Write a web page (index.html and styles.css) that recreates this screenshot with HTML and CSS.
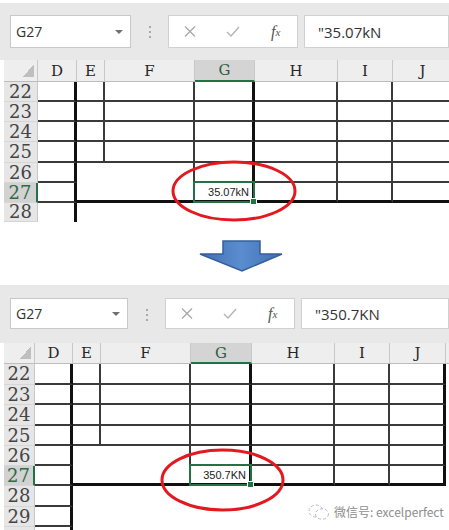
FILE: index.html
```html
<!DOCTYPE html>
<html>
<head>
    <meta charset="UTF-8">
    <title>G27 before and after</title>
    <link rel="stylesheet" href="styles.css">
</head>
<body>
<div class="page">

    <!-- Before -->
    <section class="shot shot-top">
        <div class="toolbar">
            <div class="namebox">G27<i class="caret"></i></div>
            <div class="grip"><i></i><i></i><i></i></div>
            <div class="fbtns">
                <span><svg width="12" height="11" viewBox="0 0 12 11"><path d="M1 0.5 L11 10.5 M11 0.5 L1 10.5" stroke="#a8a8a8" stroke-width="1.3" fill="none"/></svg></span>
                <span><svg width="14" height="11" viewBox="0 0 14 11"><path d="M1 6 L5 10 L13 1" stroke="#b4b4b4" stroke-width="1.4" fill="none"/></svg></span>
                <span class="fx">f<sub>x</sub></span>
            </div>
            <div class="fbar">"35.07kN</div>
        </div>
        <div class="grid">
            <div class="ch corner"></div><div class="ch">D</div><div class="ch">E</div><div class="ch">F</div><div class="ch on">G</div><div class="ch">H</div><div class="ch">I</div><div class="ch">J</div>

            <div class="rh">22</div><div class="b R"></div><div class="b r"></div><div class="b r"></div><div class="b R"></div><div class="b r"></div><div class="b r"></div><div class="b R"></div>
            <div class="rh">23</div><div class="b R"></div><div class="b r"></div><div class="b r"></div><div class="b R"></div><div class="b r"></div><div class="b r"></div><div class="b R"></div>
            <div class="rh">24</div><div class="b R"></div><div class="b r"></div><div class="b r"></div><div class="b R"></div><div class="b r"></div><div class="b r"></div><div class="b R"></div>
            <div class="rh">25</div><div class="b R"></div><div class="b r"></div><div class="b r"></div><div class="b R"></div><div class="b r"></div><div class="b r"></div><div class="b R"></div>
            <div class="rh">26</div><div class="b R"></div><div class="merge r B"></div><div class="b R"></div><div class="b r"></div><div class="b r"></div><div class="b R"></div>
            <div class="rh on">27</div><div class="b R"></div><div class="B R sel">35.07kN</div><div class="B r"></div><div class="B r"></div><div class="B R"></div>
            <div class="rh">28</div><div class="R"></div><div class="rest"></div>
        </div>
    </section>

    <div class="arrow-row">
        <svg width="86" height="36" viewBox="0 0 86 36">
            <defs>
                <linearGradient id="blue" x1="0" y1="0" x2="1" y2="0">
                    <stop offset="0" stop-color="#3f6fb0"/>
                    <stop offset="0.5" stop-color="#5a8dd0"/>
                    <stop offset="1" stop-color="#3f6fb0"/>
                </linearGradient>
            </defs>
            <polygon points="24,2 61,2 61,15 83,15 43,32 1,15 24,15" fill="url(#blue)" stroke="#355f9c" stroke-width="1.5"/>
        </svg>
    </div>

    <!-- After -->
    <section class="shot shot-bottom">
        <div class="toolbar">
            <div class="namebox">G27<i class="caret"></i></div>
            <div class="grip"><i></i><i></i><i></i></div>
            <div class="fbtns">
                <span><svg width="12" height="11" viewBox="0 0 12 11"><path d="M1 0.5 L11 10.5 M11 0.5 L1 10.5" stroke="#a8a8a8" stroke-width="1.3" fill="none"/></svg></span>
                <span><svg width="14" height="11" viewBox="0 0 14 11"><path d="M1 6 L5 10 L13 1" stroke="#b4b4b4" stroke-width="1.4" fill="none"/></svg></span>
                <span class="fx">f<sub>x</sub></span>
            </div>
            <div class="fbar">"350.7KN</div>
        </div>
        <div class="grid">
            <div class="ch corner"></div><div class="ch">D</div><div class="ch">E</div><div class="ch">F</div><div class="ch on">G</div><div class="ch">H</div><div class="ch">I</div><div class="ch">J</div><div class="ch"></div>

            <div class="rh">22</div><div class="b R"></div><div class="b r"></div><div class="b r"></div><div class="b R"></div><div class="b r"></div><div class="b r"></div><div class="b R"></div><div></div>
            <div class="rh">23</div><div class="b R"></div><div class="b r"></div><div class="b r"></div><div class="b R"></div><div class="b r"></div><div class="b r"></div><div class="b R"></div><div></div>
            <div class="rh">24</div><div class="b R"></div><div class="b r"></div><div class="b r"></div><div class="b R"></div><div class="b r"></div><div class="b r"></div><div class="b R"></div><div></div>
            <div class="rh">25</div><div class="b R"></div><div class="b r"></div><div class="b r"></div><div class="b R"></div><div class="b r"></div><div class="b r"></div><div class="b R"></div><div></div>
            <div class="rh">26</div><div class="b R"></div><div class="merge r B"></div><div class="b R"></div><div class="b r"></div><div class="b r"></div><div class="b R"></div><div></div>
            <div class="rh on">27</div><div class="b R"></div><div class="B R sel">350.7KN</div><div class="B r"></div><div class="B r"></div><div class="B R"></div><div></div>
            <div class="rh">28</div><div class="b R"></div><div class="rest"></div>
            <div class="rh">29</div><div class="b R"></div><div class="rest"></div>
            <div class="rh"></div><div class="R"></div><div class="rest"></div>
        </div>
    </section>

    <svg class="marks" width="449" height="530" viewBox="0 0 449 530">
        <ellipse cx="234" cy="191" rx="61" ry="29" fill="none" stroke="#e3191f" stroke-width="3"/>
        <ellipse cx="222.5" cy="480" rx="60.5" ry="30" fill="none" stroke="#e3191f" stroke-width="3"/>
    </svg>

    <div class="watermark">
        <svg width="22" height="16" viewBox="0 0 22 16">
            <ellipse cx="8" cy="7" rx="7" ry="6" fill="none" stroke="#b8b8b8" stroke-width="1" stroke-dasharray="3 2"/>
            <ellipse cx="14" cy="10" rx="6.5" ry="5.2" fill="#fff" stroke="#b8b8b8" stroke-width="1" stroke-dasharray="3 2"/>
        </svg>
        <span>微信号: excelperfect</span>
    </div>
</div>
</body>
</html>
```

FILE: styles.css
```css
body {
    margin: 0;
    background: #fff;
    font-family: "Open Sans", "Noto Sans", sans-serif;
}

.page {
    position: relative;
    width: 449px;
    height: 530px;
    overflow: hidden;
}

/* one screenshot of the sheet */
.shot {
    overflow: hidden;
    --nb-w: 121px;
    --nb-h: 33px;
    --tb-h: 57px;
    --tb-pad: 12px;
    --cols: 34px 39px 28px 90px 60px 83px 55px 60px;
    --rows: 22px 20px 20px 20px 21px 20px 20px 19px;
}

.shot-top {
    margin-top: 3px;
    height: 219px;
}

.shot-bottom {
    height: 245px;
    --nb-w: 118px;
    --nb-h: 31px;
    --tb-h: 58px;
    --tb-pad: 13px;
    --cols: 31px 38px 28px 90px 61px 83px 55px 56px 40px;
    --rows: 21px 21px 20px 21px 20px 20px 20px 21px 20px 20px;
}

/* name box + formula bar */
.toolbar {
    display: flex;
    align-items: flex-start;
    box-sizing: border-box;
    height: var(--tb-h);
    padding-top: var(--tb-pad);
    background: #e8e8e8;
}

.namebox {
    display: flex;
    align-items: center;
    justify-content: space-between;
    box-sizing: border-box;
    width: var(--nb-w);
    height: var(--nb-h);
    margin-left: 10px;
    padding: 0 7px 0 5px;
    background: #fff;
    border: 1px solid #c8c8c8;
    color: #333;
    font-size: 14px;
}

.caret {
    width: 0;
    height: 0;
    border-left: 4px solid transparent;
    border-right: 4px solid transparent;
    border-top: 4px solid #707070;
}

.grip {
    display: flex;
    flex-direction: column;
    align-items: center;
    gap: 3px;
    width: 37px;
    padding-top: 11px;
}

.grip i {
    width: 2px;
    height: 2px;
    background: #a8a8a8;
}

.fbtns {
    display: flex;
    box-sizing: border-box;
    width: 130px;
    height: var(--nb-h);
    background: #fff;
    border: 1px solid #d0d0d0;
}

.fbtns span {
    flex: 1;
    display: flex;
    align-items: center;
    justify-content: center;
}

.fbtns .fx {
    font-family: "Liberation Serif", serif;
    font-style: italic;
    font-size: 16px;
    color: #555;
}

.fx sub {
    font-size: 11px;
    vertical-align: -1px;
}

.fbar {
    flex: 1;
    display: flex;
    align-items: center;
    box-sizing: border-box;
    height: var(--nb-h);
    margin-left: 6px;
    padding-left: 13px;
    background: #fff;
    border: 1px solid #d0d0d0;
    color: #333;
    font-size: 15px;
}

/* worksheet */
.grid {
    display: grid;
    grid-template-columns: var(--cols);
    grid-template-rows: var(--rows);
    margin-left: 4px;
}

.grid > div {
    box-sizing: border-box;
}

.ch {
    display: flex;
    align-items: center;
    justify-content: center;
    background: #eeeeee;
    border-right: 1px solid #c8c8c8;
    border-bottom: 1px solid #bdbdbd;
    color: #262626;
    font-family: "DejaVu Serif", serif;
    font-size: 15px;
}

.ch.on {
    background: #d4d4d4;
    border-bottom: 2px solid #217346;
    color: #2f5d40;
}

.corner {
    background: #eeeeee linear-gradient(to bottom right, transparent 50%, #bfbfbf 50%) no-repeat right 3px bottom 4px / 11px 13px;
}

.rh {
    display: flex;
    align-items: center;
    justify-content: center;
    background: #e6e6e6;
    border-right: 1px solid #c8c8c8;
    border-bottom: 1px solid #d6d6d6;
    color: #444;
    font-family: "DejaVu Serif", serif;
    font-size: 18px;
    line-height: 20px;
}

.rh.on {
    background: #d2d2d2;
    border-right: 2px solid #217346;
    color: #2f6b47;
}

.b { border-bottom: 2px solid #3a3a3a; }
.B { border-bottom: 3px solid #111; }
.r { border-right: 2px solid #3a3a3a; }
.R { border-right: 3px solid #111; }

.merge {
    grid-column: span 2;
    grid-row: span 2;
}

.rest {
    grid-column: span 7;
}

.sel {
    position: relative;
    display: flex;
    align-items: center;
    justify-content: flex-end;
    padding-right: 3px;
    color: #222;
    font-family: "Liberation Sans", Arial, sans-serif;
    font-size: 11px;
}

.sel::after {
    content: "";
    position: absolute;
    top: -2px;
    left: -2px;
    right: -3px;
    bottom: -3px;
    border: 2px solid #217346;
}

.sel::before {
    content: "";
    position: absolute;
    right: -5px;
    bottom: -5px;
    width: 5px;
    height: 5px;
    background: #217346;
    border: 1px solid #fff;
    z-index: 1;
}

.arrow-row {
    height: 63px;
    padding: 17px 0 0 199px;
    box-sizing: border-box;
}

.arrow-row svg {
    display: block;
}

.marks {
    position: absolute;
    top: 0;
    left: 0;
    pointer-events: none;
}

.watermark {
    position: absolute;
    left: 308px;
    top: 503px;
    display: flex;
    align-items: center;
    gap: 4px;
    color: #8e8e8e;
    font-family: "Noto Sans CJK SC", "Noto Sans", sans-serif;
    font-size: 12px;
}
```
